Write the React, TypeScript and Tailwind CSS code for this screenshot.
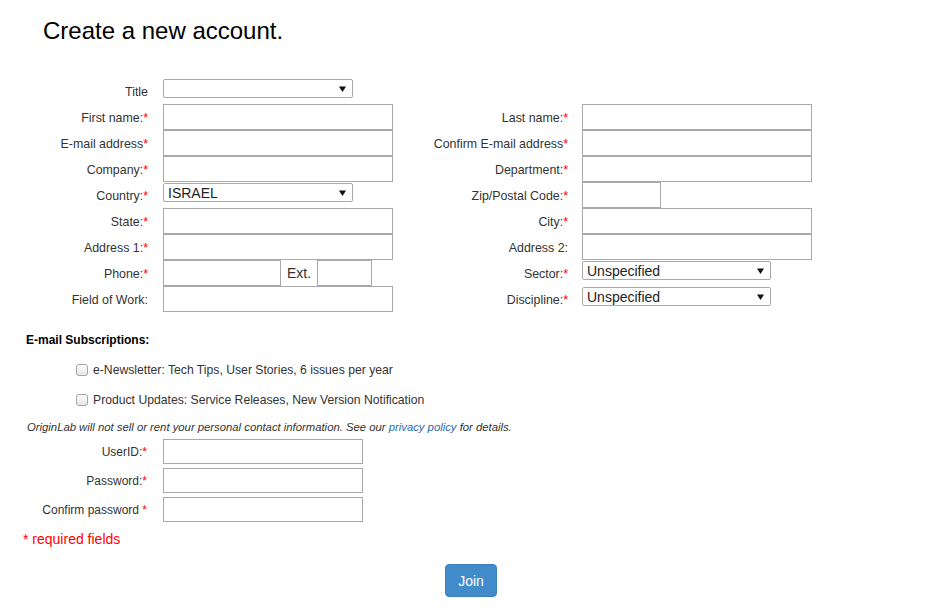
const Star = () => <span className="text-[#ff0000]">*</span>;

const Label = ({ text, req, width, pr }: { text: string; req?: boolean; width: string; pr: string }) => (
    <div className={`${width} ${pr} h-[26px] pt-[3px] flex items-center justify-end text-[12.4px] text-[#333] whitespace-nowrap`}>
        {text}
        {req && <Star />}
    </div>
);

const Input = ({ w = 'w-[230px]', h = 'h-[26px]' }: { w?: string; h?: string }) => (
    <div className={`${w} ${h} border border-[#a9a9a9] bg-white shrink-0`} />
);

const Select = ({ value = '', w = 'w-[190px]' }: { value?: string; w?: string }) => (
    <div className={`${w} h-[19px] mt-px border border-[#a9a9a9] rounded-[2px] flex items-center justify-between pl-[4px] pr-[6px] text-[14px] text-[#222] leading-none bg-white shrink-0`}>
        <span>{value}</span>
        <svg width="7" height="6" viewBox="0 0 7 6">
            <path d="M0 0.5H7L3.5 6Z" fill="#111" />
        </svg>
    </div>
);

type Field = { label: string; req?: boolean; kind?: 'input' | 'select' | 'zip' | 'phone' | 'none'; value?: string };

const rows: [Field, Field][] = [
    [{ label: 'Title', kind: 'select' }, { label: '', kind: 'none' }],
    [{ label: 'First name:', req: true }, { label: 'Last name:', req: true }],
    [{ label: 'E-mail address', req: true }, { label: 'Confirm E-mail address', req: true }],
    [{ label: 'Company:', req: true }, { label: 'Department:', req: true }],
    [{ label: 'Country:', req: true, kind: 'select', value: 'ISRAEL' }, { label: 'Zip/Postal Code:', req: true, kind: 'zip' }],
    [{ label: 'State:', req: true }, { label: 'City:', req: true }],
    [{ label: 'Address 1:', req: true }, { label: 'Address 2:' }],
    [{ label: 'Phone:', req: true, kind: 'phone' }, { label: 'Sector:', req: true, kind: 'select', value: 'Unspecified' }],
    [{ label: 'Field of Work:' }, { label: 'Discipline:', req: true, kind: 'select', value: 'Unspecified' }],
];

const Control = ({ f, right }: { f: Field; right?: boolean }) => {
    switch (f.kind) {
        case 'select':
            return <Select value={f.value} w={right ? 'w-[189px]' : 'w-[190px]'} />;
        case 'zip':
            return <Input w="w-[79px]" />;
        case 'phone':
            return (
                <div className="flex items-start">
                    <Input w="w-[118px]" />
                    <div className="w-[36px] h-[26px] pt-[1px] flex items-center justify-center text-[14px] text-[#333]">Ext.</div>
                    <Input w="w-[55px]" />
                </div>
            );
        case 'none':
            return null;
        default:
            return <Input />;
    }
};

const App = () => (
    <div className="w-[930px] h-[613px] bg-white overflow-hidden font-['Liberation_Sans',Arial,sans-serif] text-[#333]">
        <h1 className="ml-[43px] pt-[18px] text-[24px] leading-[25px] text-black">Create a new account.</h1>

        <div className="mt-[35px]">
            {rows.map(([l, r], i) => (
                <div key={i} className="flex items-start h-[26px]">
                    <Label text={l.label} req={l.req} width="w-[163px]" pr="pr-[15px]" />
                    <div className="w-[230px]">
                        <Control f={l} />
                    </div>
                    {r.kind !== 'none' && (
                        <>
                            <Label text={r.label} req={r.req} width="w-[189px]" pr="pr-[14px]" />
                            <Control f={r} right />
                        </>
                    )}
                </div>
            ))}
        </div>

        <div className="ml-[26px] mt-[21px] text-[12px] font-bold text-black leading-[14px]">E-mail Subscriptions:</div>

        <div className="ml-[76px] mt-[16px] space-y-[16px] text-[12.2px] text-[#333]">
            {['e-Newsletter: Tech Tips, User Stories, 6 issues per year', 'Product Updates: Service Releases, New Version Notification'].map(t => (
                <div key={t} className="flex items-center h-[14px] gap-[5px]">
                    <span className="w-[12px] h-[12px] rounded-[3px] border border-[#a6a6a6] bg-[linear-gradient(#fdfdfd,#e6e6e6)]" />
                    <span>{t}</span>
                </div>
            ))}
        </div>

        <p className="ml-[27px] mt-[13px] text-[11.3px] italic text-[#333] leading-[14px]">
            OriginLab will not sell or rent your personal contact information. See our{' '}
            <span className="text-[#2a6aa8]">privacy policy</span> for details.
        </p>

        <div className="mt-[5px] space-y-[4px]">
            {['UserID:', 'Password:', 'Confirm password '].map(t => (
                <div key={t} className="flex items-center h-[25px]">
                    <div className="w-[163px] pr-[16px] pt-[1px] text-right text-[12px] text-[#333] whitespace-pre">
                        {t}
                        <Star />
                    </div>
                    <Input w="w-[200px]" h="h-[25px]" />
                </div>
            ))}
        </div>

        <div className="ml-[23px] mt-[9px] text-[14px] text-[#ff0000] leading-[16px]">* required fields</div>

        <div className="mt-[17px] flex">
            <button className="ml-[445px] w-[52px] h-[33px] pt-[1px] rounded-[4px] bg-[#428bca] text-white text-[14px] border border-[#3b7fbd]">Join</button>
        </div>
    </div>
);

export default App;
